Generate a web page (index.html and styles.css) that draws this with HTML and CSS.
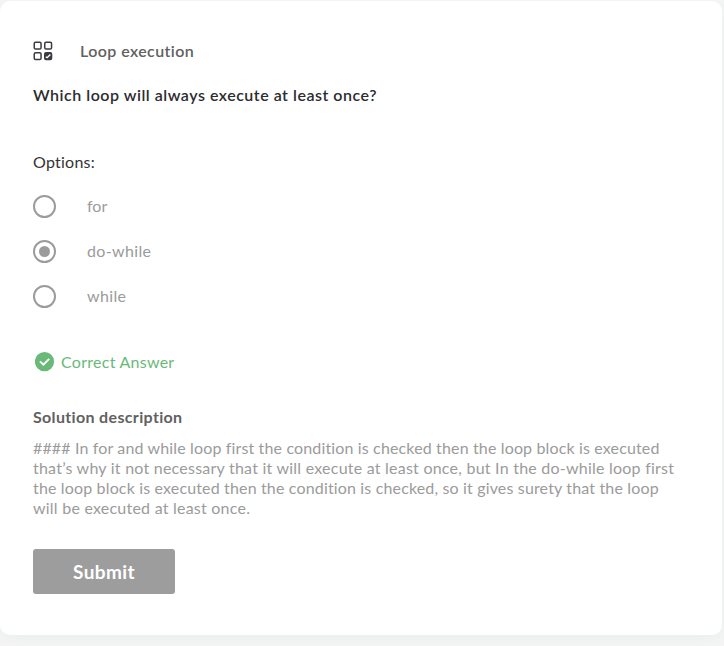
FILE: index.html
```html
<!DOCTYPE html>
<html lang="en">
<head>
<meta charset="utf-8">
<title>Loop execution</title>
<link rel="stylesheet" href="styles.css">
</head>
<body>
<main class="card">
  <header class="topic">
    <svg class="topic-icon" width="20" height="20" viewBox="0 0 20 20" fill="none" stroke="#3b3b42" stroke-width="1.5">
      <rect x="1.25" y="1.25" width="6.8" height="6.8" rx="1.3"/>
      <rect x="11.75" y="1.25" width="6.8" height="6.8" rx="1.3"/>
      <rect x="1.25" y="11.75" width="6.8" height="6.8" rx="1.3"/>
      <rect x="11.75" y="11.75" width="6.8" height="6.8" rx="1.3" fill="#3b3b42"/>
      <path d="M12.8 15.7l1.3 1 3.3-3.2" stroke="#fff" stroke-width="1.4"/>
    </svg>
    <h1 class="topic-title">Loop execution</h1>
  </header>
  <h2 class="question">Which loop will always execute at least once?</h2>
  <p class="options-label">Options:</p>
  <ul class="options">
    <li class="option"><span class="radio"></span><span class="option-text tight">for</span></li>
    <li class="option"><span class="radio checked"></span><span class="option-text">do-while</span></li>
    <li class="option"><span class="radio"></span><span class="option-text">while</span></li>
  </ul>
  <div class="result">
    <svg class="result-icon" width="20" height="20" viewBox="0 0 20 20">
      <circle cx="9.5" cy="9.6" r="9.6" fill="#69b978"/>
      <path d="M5 9.4l3.4 3.3 5.8-5.8" fill="none" stroke="#fff" stroke-width="2"/>
    </svg>
    <span class="result-text">Correct Answer</span>
  </div>
  <h3 class="solution-title">Solution description</h3>
  <p class="solution">
    <span class="line-a">#### In for and while loop first the condition is checked then the loop block is executed</span><br>
    <span class="line-b">that’s why it not necessary that it will execute at least once, but In the do-while loop first</span><br>
    <span class="line-c">the loop block is executed then the condition is checked, so it gives surety that the loop</span><br>
    <span class="line-b">will be executed at least once.</span>
  </p>
  <button class="submit" type="button">Submit</button>
</main>
</body>
</html>
```
FILE: styles.css
```css
* { box-sizing: border-box; }
body {
  margin: 0;
  height: 646px;
  padding: 1px 2px 0 0;
  overflow: hidden;
  background: #f5f5f5;
  font-family: Lato, "Open Sans", sans-serif;
  font-size: 16px;
  line-height: 20px;
  color: #9b9b9b;
}
h1, h2, h3, p, ul { margin: 0; padding: 0; font-size: 16px; }
.card {
  height: 634px;
  padding: 40px 33px 0;
  background: #fff;
  border-radius: 10px;
  box-shadow: 0 4px 16px rgba(60, 90, 110, 0.05);
}
.topic { display: flex; align-items: center; height: 20px; }
.topic-icon { flex: none; }
.topic-title {
  margin-left: 27px;
  font-weight: 600;
  letter-spacing: 0.42px;
  color: #616161;
}
.question {
  margin-top: 24px;
  font-weight: 600;
  letter-spacing: 0.52px;
  white-space: nowrap;
  color: #2c2c2f;
}
.options-label { margin-top: 47px; letter-spacing: 0.25px; color: #333; }
.options {
  display: grid;
  gap: 22px;
  margin-top: 23px;
  list-style: none;
}
.option { display: flex; align-items: center; height: 23px; }
.radio {
  display: grid;
  place-items: center;
  width: 23px;
  height: 23px;
  border: 2px solid #9b9b9b;
  border-radius: 50%;
}
.checked::after {
  content: "";
  width: 11px;
  height: 11px;
  border-radius: 50%;
  background: #9b9b9b;
}
.option-text { margin: 0 0 2px 31px; letter-spacing: 0.35px; }
.tight { letter-spacing: 0; }
.result { display: flex; align-items: center; height: 20px; margin: 44px 0 0 2px; color: #69b978; }
.result-text { margin-left: 6px; letter-spacing: 0.27px; }
.solution-title {
  margin-top: 35px;
  font-weight: 700;
  letter-spacing: 0.34px;
  color: #616161;
}
.solution { margin-top: 11px; white-space: nowrap; }
.line-a { letter-spacing: 0.145px; }
.line-b { letter-spacing: 0.23px; }
.line-c { letter-spacing: 0.155px; }
.submit {
  display: block;
  width: 142px;
  height: 45px;
  margin-top: 31px;
  padding: 0 0 1px;
  border: 0;
  border-radius: 3px;
  background: #9d9d9d;
  color: #fff;
  font: 700 19px Lato, "Open Sans", sans-serif;
  letter-spacing: 0.4px;
}
```
